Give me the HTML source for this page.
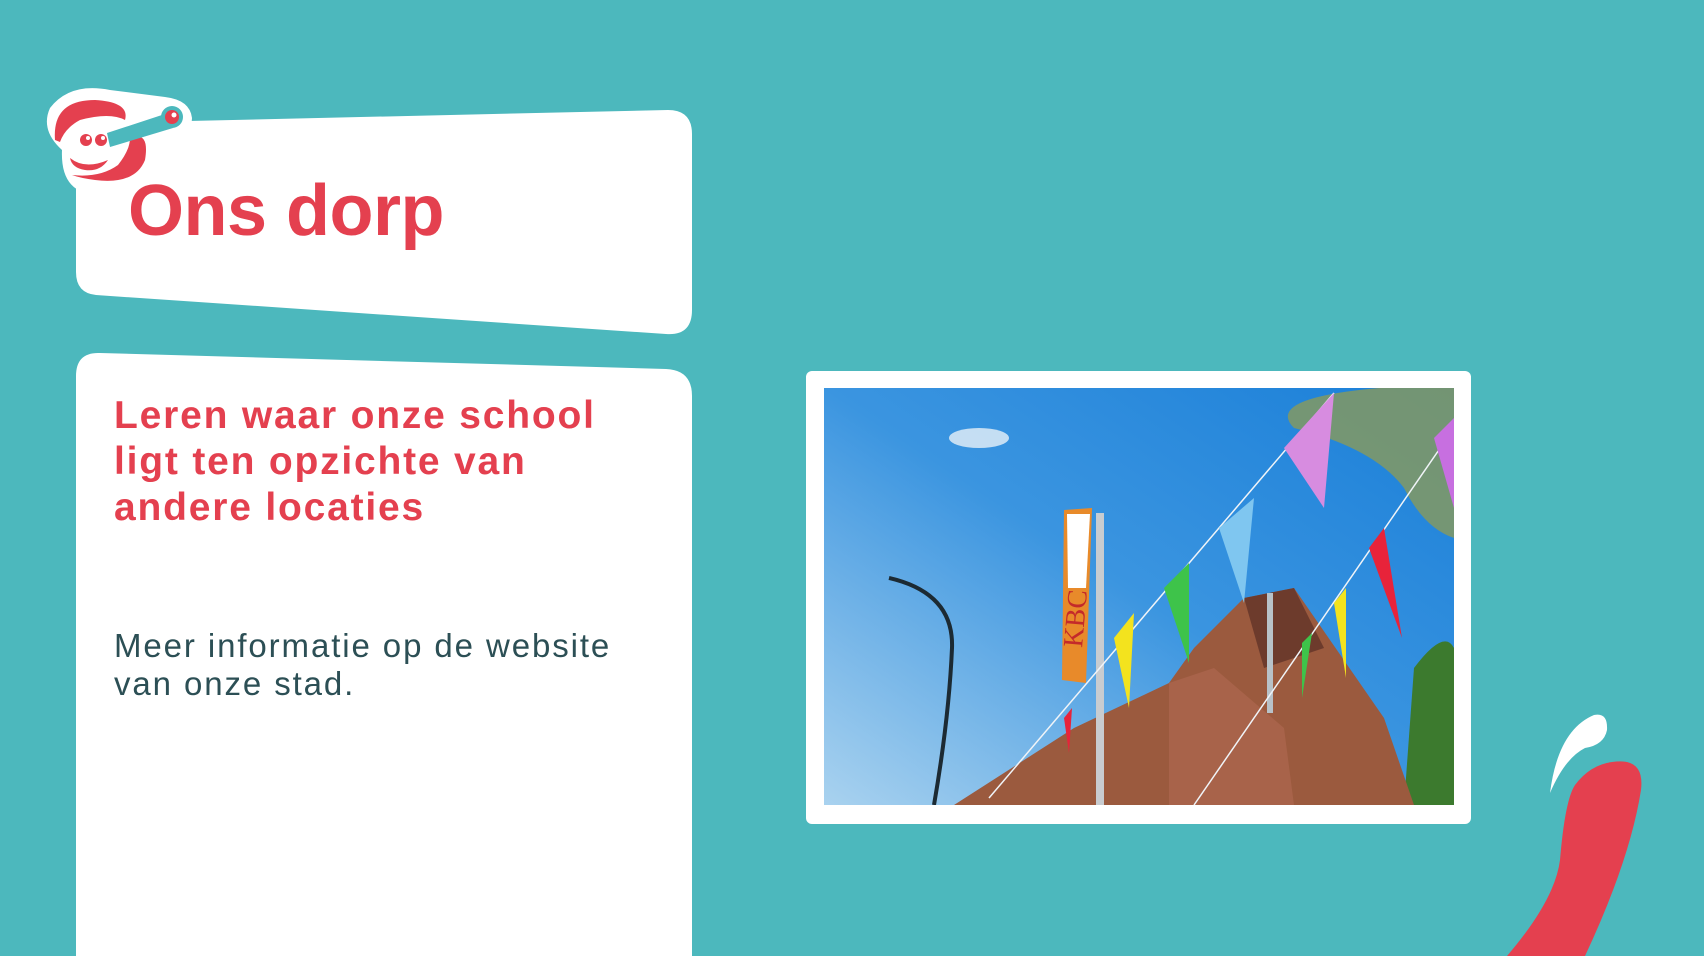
<!DOCTYPE html>
<html><head><meta charset="utf-8"><style>
html,body{margin:0;padding:0}
body{width:1704px;height:956px;background:#4cb8bd;position:relative;overflow:hidden;font-family:"Liberation Sans",sans-serif}
.t{position:absolute;left:128px;top:170px;font-size:72px;font-weight:bold;color:#e4404f;letter-spacing:-0.5px}
.h{position:absolute;left:114px;top:393px;width:600px;font-size:39px;line-height:46px;font-weight:bold;color:#e4404f;white-space:nowrap;letter-spacing:1.8px}
.b{position:absolute;left:114px;top:627px;width:600px;font-size:33px;line-height:38px;color:#2c4f55;white-space:nowrap;letter-spacing:1.9px}
.frame{position:absolute;left:806px;top:371px;width:665px;height:453px;background:#fff;border-radius:6px}
</style></head><body>
<svg width="1704" height="956" style="position:absolute;left:0;top:0">
<path d="M100 123 L668 110 Q692 110 692 134 L692 310 Q692 336 666 334 L96 295 Q76 293 76 272 L76 146 Q76 124 100 123Z" fill="#fff"/>
<path d="M100 353 L666 369 Q692 370 692 396 L692 960 L76 960 L76 376 Q76 352 100 353Z" fill="#fff"/>
<g>
<path d="M62 150 Q40 130 50 108 Q70 82 110 90 L165 97 Q190 100 192 118 Q192 135 160 142 L155 150 Q150 185 100 195 Q60 195 62 150Z" fill="#fff"/>
<path d="M55 140 Q52 100 95 100 Q130 102 125 120 Q110 112 80 120 Q65 128 60 142Z" fill="#e4404f"/>
<path d="M130 138 Q150 130 145 160 Q135 185 95 180 Q80 178 72 175 Q100 178 118 165 Q130 150 130 138Z" fill="#e4404f"/>
<path d="M70 158 Q85 170 108 160 Q100 172 85 170 Q72 168 70 158Z" fill="#e4404f"/>
<circle cx="86" cy="140" r="6" fill="#e4404f"/><circle cx="101" cy="140" r="6" fill="#e4404f"/>
<circle cx="88" cy="138" r="2" fill="#fff"/><circle cx="103" cy="138" r="2" fill="#fff"/>
<path d="M107 133 L168 113 L173 128 L110 147Z" fill="#4cb8bd"/>
<circle cx="172" cy="117" r="11" fill="#4cb8bd"/><circle cx="172" cy="117" r="7" fill="#e4404f"/><circle cx="174" cy="115" r="2.5" fill="#fff"/>
</g>
<path d="M1612 762 Q1645 757 1641 790 Q1630 860 1585 956 L1507 956 Q1555 900 1560 860 Q1565 800 1575 785 Q1590 765 1612 762Z" fill="#e4404f"/>
<path d="M1550 793 Q1558 730 1594 715 Q1608 712 1607 730 Q1604 745 1585 748 Q1565 758 1550 793Z" fill="#fff"/>
</svg>
<div class="t">Ons dorp</div>
<div class="h">Leren waar onze school<br>ligt ten opzichte van<br>andere locaties</div>
<div class="b">Meer informatie op de website<br>van onze stad.</div>
<div class="frame">
<svg width="630" height="417" style="position:absolute;left:18px;top:17px">
<defs><linearGradient id="s" x1="0" y1="1" x2="1" y2="0"><stop offset="0" stop-color="#a9d2ef"/><stop offset="0.5" stop-color="#3b95e0"/><stop offset="1" stop-color="#1a7fd8"/></linearGradient></defs>
<rect width="630" height="417" fill="url(#s)"/>
<ellipse cx="155" cy="50" rx="30" ry="10" fill="#e8f1f8" opacity=".8"/>
<path d="M555 0 L630 0 L630 150 Q600 140 580 100 Q550 60 470 40 Q440 10 555 0Z" fill="#8a9a5a" opacity=".8"/>
<path d="M590 280 Q620 240 630 260 L630 417 L580 417Z" fill="#3c7a2e"/>
<path d="M130 417 L250 340 L345 295 L370 260 L420 210 L470 200 L560 330 L590 417Z" fill="#9b5a3e"/>
<path d="M345 417 L345 295 L390 280 L460 340 L470 417Z" fill="#a8634a"/>
<path d="M420 210 L470 200 L500 260 L440 280Z" fill="#6d3b2c"/>
<rect x="443" y="205" width="6" height="120" fill="#b8c2c8"/>
<rect x="272" y="125" width="8" height="292" fill="#c8ccd0"/>
<path d="M240 122 L268 120 L262 295 L238 292Z" fill="#e88a2a"/>
<path d="M243 126 L266 126 L262 200 L244 200Z" fill="#fff"/>
<text x="0" y="0" transform="translate(258,260) rotate(-85)" font-size="28" fill="#c42a2a" font-family="Liberation Serif,serif">KBC</text>
<path d="M110 417 Q125 330 128 260 Q130 205 65 190" stroke="#1c2a33" stroke-width="4" fill="none"/>
<path d="M165 410 L510 5" stroke="#f0f4f8" stroke-width="1.5"/>
<path d="M370 417 L630 40" stroke="#f0f4f8" stroke-width="1.5"/>
<path d="M460 60 L510 5 L500 120Z" fill="#d78ce0"/>
<path d="M395 140 L430 110 L420 215Z" fill="#7fc6f0"/>
<path d="M340 200 L365 175 L365 275Z" fill="#3ec34a"/>
<path d="M290 250 L310 225 L305 320Z" fill="#f3e31e"/>
<path d="M610 50 L630 30 L630 120Z" fill="#c76fe0"/>
<path d="M545 160 L560 140 L578 250Z" fill="#e8233a"/>
<path d="M510 215 L522 200 L522 290Z" fill="#f3e31e"/>
<path d="M478 255 L488 245 L478 310Z" fill="#3ec34a"/>
<path d="M240 330 L248 320 L245 365Z" fill="#e8233a"/>
</svg>
</div>
</body></html>
